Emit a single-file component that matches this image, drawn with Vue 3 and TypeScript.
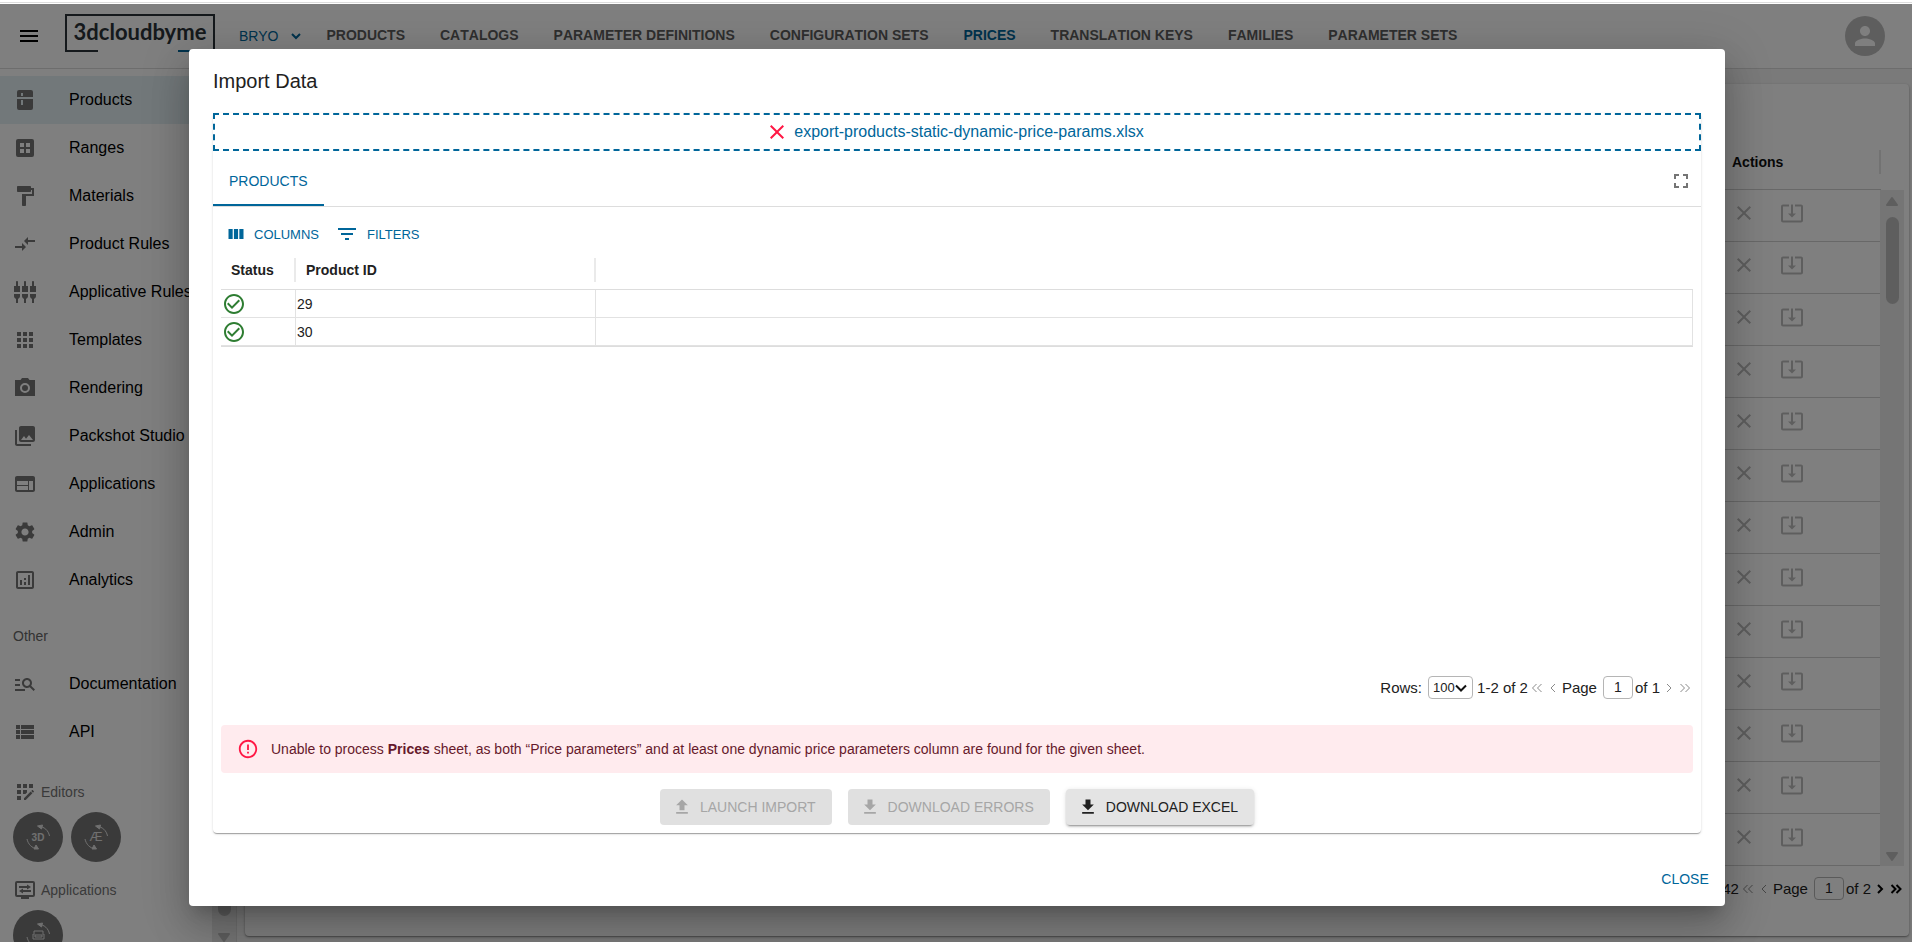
<script setup lang="ts">
import { ref } from 'vue'

const paths: Record<string, string> = {
  menu: 'M3 18h18v-2H3v2zm0-5h18v-2H3v2zm0-7v2h18V6H3z',
  kitchen: 'M6 2h12a2 2 0 0 1 2 2v5H4V4a2 2 0 0 1 2-2zm2 3v3h2V5zM4 11h16v9a2 2 0 0 1-2 2H6a2 2 0 0 1-2-2zm4 1v5h2v-5z',
  ranges: 'M5 3h14a2 2 0 0 1 2 2v14a2 2 0 0 1-2 2H5a2 2 0 0 1-2-2V5a2 2 0 0 1 2-2zm2 4v4h4V7zm6 0v4h4V7zm-6 6v4h4v-4zm6 0v4h4v-4z',
  paint: 'M18 4V3c0-.55-.45-1-1-1H5c-.55 0-1 .45-1 1v4c0 .55.45 1 1 1h12c.55 0 1-.45 1-1V6h1v4H9v11c0 .55.45 1 1 1h2c.55 0 1-.45 1-1v-9h8V4h-3z',
  compare: 'M9.01 14H2v2h7.01v3L13 15l-3.99-4v3zm5.98-1v-3H22V8h-7.01V5L11 9l3.99 4z',
  inputs: 'M5 2c0-.55-.45-1-1-1s-1 .45-1 1v4H1v6h6V6H5V2zm4 14c0 1.3.84 2.4 2 2.82V23h2v-4.18c1.16-.41 2-1.51 2-2.82v-2H9v2zm-8 0c0 1.3.84 2.4 2 2.82V23h2v-4.18C6.16 18.4 7 17.3 7 16v-2H1v2zM21 6V2c0-.55-.45-1-1-1s-1 .45-1 1v4h-2v6h6V6h-2zm-8-4c0-.55-.45-1-1-1s-1 .45-1 1v4H9v6h6V6h-2V2zm4 14c0 1.3.84 2.4 2 2.82V23h2v-4.18c1.16-.41 2-1.51 2-2.82v-2h-6v2z',
  apps: 'M4 8h4V4H4v4zm6 12h4v-4h-4v4zm-6 0h4v-4H4v4zm0-6h4v-4H4v4zm6 0h4v-4h-4v4zm6-10v4h4V4h-4zm-6 4h4V4h-4v4zm6 6h4v-4h-4v4zm0 6h4v-4h-4v4z',
  camera: 'M9 2 7.5 4H2v16h20V4h-5.5L15 2zM12 7a5 5 0 1 1 0 10 5 5 0 0 1 0-10zm0 2a3 3 0 1 0 0 6 3 3 0 0 0 0-6z',
  photos: 'M22 16V4c0-1.1-.9-2-2-2H8c-1.1 0-2 .9-2 2v12c0 1.1.9 2 2 2h12c1.1 0 2-.9 2-2zm-11-4l2.03 2.71L16 11l4 5H8l3-4zM2 6v14c0 1.1.9 2 2 2h14v-2H4V6H2z',
  web: 'M20 4H4c-1.1 0-1.99.9-1.99 2L2 18c0 1.1.9 2 2 2h16c1.1 0 2-.9 2-2V6c0-1.1-.9-2-2-2zm-5 14H4v-4h11v4zm0-5H4V9h11v4zm5 5h-4V9h4v9z',
  gear: 'M19.14 12.94c.04-.3.06-.61.06-.94 0-.32-.02-.64-.07-.94l2.03-1.58c.18-.14.23-.41.12-.61l-1.92-3.32c-.12-.22-.37-.29-.59-.22l-2.39.96c-.5-.38-1.03-.7-1.62-.94l-.36-2.54c-.04-.24-.24-.41-.48-.41h-3.84c-.24 0-.43.17-.47.41l-.36 2.54c-.59.24-1.13.57-1.62.94l-2.39-.96c-.22-.08-.47 0-.59.22L2.74 8.87c-.12.21-.08.47.12.61l2.03 1.58c-.05.3-.09.63-.09.94s.02.64.07.94l-2.03 1.58c-.18.14-.23.41-.12.61l1.92 3.32c.12.22.37.29.59.22l2.39-.96c.5.38 1.03.7 1.62.94l.36 2.54c.05.24.24.41.48.41h3.84c.24 0 .44-.17.47-.41l.36-2.54c.59-.24 1.13-.56 1.62-.94l2.39.96c.22.08.47 0 .59-.22l1.92-3.32c.12-.22.07-.47-.12-.61l-2.01-1.58zM12 15.6c-1.98 0-3.6-1.62-3.6-3.6s1.62-3.6 3.6-3.6 3.6 1.62 3.6 3.6-1.62 3.6-3.6 3.6z',
  chart: 'M9 17H7v-5h2v5zm4 0h-2v-3h2v3zm0-5h-2v-2h2v2zm4 5h-2V7h2v10zm2 2H5V5h14v14zm0-16H5c-1.1 0-2 .9-2 2v14c0 1.1.9 2 2 2h14c1.1 0 2-.9 2-2V5c0-1.1-.9-2-2-2z',
  docs: 'M7 9H2V7h5v2zm0 3H2v2h5v-2zm13.59 7-3.83-3.83c-.8.52-1.74.83-2.76.83-2.76 0-5-2.24-5-5s2.24-5 5-5 5 2.24 5 5c0 1.02-.31 1.96-.83 2.75L22 17.59 20.59 19zM17 11c0-1.65-1.35-3-3-3s-3 1.35-3 3 1.35 3 3 3 3-1.35 3-3zM2 19h10v-2H2v2z',
  list: 'M3 14h4v-4H3v4zm0 5h4v-4H3v4zM3 9h4V5H3v4zm5 5h13v-4H8v4zm0 5h13v-4H8v4zM8 5v4h13V5H8z',
  editors: 'M10 4h4v4h-4zM4 16h4v4H4zM4 10h4v4H4zM4 4h4v4H4zM14 12.42V10h-4v4h2.42zM20.88 11.29l-1.17-1.17c-.16-.16-.42-.16-.58 0L18.25 11 20 12.75l.88-.88c.16-.16.16-.42 0-.58zM11 18.25V20h1.75l6.67-6.67-1.75-1.75zM16 4h4v4h-4z',
  monitor: 'M4 3h16a2 2 0 0 1 2 2v12a2 2 0 0 1-2 2h-4v2H8v-2H4a2 2 0 0 1-2-2V5a2 2 0 0 1 2-2zm0 2v12h16V5zm2 3h8V6.500l4 2.500-4 2.500V10H6zm12 4v2h-8v1.500L6 13l4-2.500V12z',
  person: 'M12 12c2.21 0 4-1.79 4-4s-1.790-4-4-4-4 1.790-4 4 1.790 4 4 4zm0 2c-2.670 0-8 1.340-8 4v2h16v-2c0-2.660-5.330-4-8-4z',
  close: 'M19 6.410 17.590 5 12 10.590 6.410 5 5 6.410 10.590 12 5 17.590 6.410 19 12 13.410 17.590 19 19 17.590 13.410 12z',
  update: 'M12 16.500l4-4h-3v-9h-2v9H8l4 4zm9-13h-6v1.990h6v14.030H3V5.490h6V3.500H3c-1.100 0-2 .900-2 2v14c0 1.100.900 2 2 2h18c1.100 0 2-.900 2-2v-14c0-1.100-.900-2-2-2z',
  fullscreen: 'M7 14H5v5h5v-2H7v-3zm-2-4h2V7h3V5H5v5zm12 7h-3v2h5v-5h-2v3zM14 5v2h3v3h2V5h-5z',
  columns: 'M3 6h5v12H3zm6.500 0h5v12h-5zM16 6h5v12h-5z',
  filter: 'M10 18h4v-2h-4v2zM3 6v2h18V6H3zm3 7h12v-2H6v2z',
  check: 'M16.590 7.580L10 14.170l-3.590-3.580L5 12l5 5 8-8zM12 2C6.480 2 2 6.480 2 12s4.480 10 10 10 10-4.480 10-10S17.520 2 12 2zm0 18c-4.420 0-8-3.580-8-8s3.580-8 8-8 8 3.580 8 8-3.580 8-8 8z',
  error: 'M11 15h2v2h-2zm0-8h2v6h-2zm.990-5C6.470 2 2 6.480 2 12s4.470 10 9.990 10C17.520 22 22 17.520 22 12S17.520 2 11.990 2zM12 20c-4.420 0-8-3.580-8-8s3.580-8 8-8 8 3.580 8 8-3.580 8-8 8z',
  upload: 'M5 20h14v-2H5v2zm0-10h4v6h6v-6h4l-7-7-7 7z',
  download: 'M19 9h-4V3H9v6H5l7 7 7-7zM5 18v2h14v-2H5z',
}

const navigation = [
  'PRODUCTS', 'CATALOGS', 'PARAMETER DEFINITIONS', 'CONFIGURATION SETS',
  'PRICES', 'TRANSLATION KEYS', 'FAMILIES', 'PARAMETER SETS',
]

const menu = [
  { label: 'Products', icon: 'kitchen' },
  { label: 'Ranges', icon: 'ranges' },
  { label: 'Materials', icon: 'paint' },
  { label: 'Product Rules', icon: 'compare' },
  { label: 'Applicative Rules', icon: 'inputs' },
  { label: 'Templates', icon: 'apps' },
  { label: 'Rendering', icon: 'camera' },
  { label: 'Packshot Studio', icon: 'photos' },
  { label: 'Applications', icon: 'web' },
  { label: 'Admin', icon: 'gear' },
  { label: 'Analytics', icon: 'chart' },
]

const otherMenu = [
  { label: 'Documentation', icon: 'docs' },
  { label: 'API', icon: 'list' },
]

const products = [29, 30]
const rowsPerPage = ref('100')
const page = ref('1')
const backgroundPage = ref('1')
</script>

<template>
  <div class="page">
    <div class="strip"></div>
    <div class="app">
      <header class="topbar">
        <button class="plain menu-button" aria-label="Menu">
          <svg class="icon" viewBox="0 0 24 24"><path :d="paths.menu" /></svg>
        </button>
        <a class="logo" href="#">
          <svg class="logo-frame" viewBox="0 0 150 38" aria-hidden="true">
            <path d="M33 37H1V1h148v36h-2" fill="none" stroke="#2b3338" stroke-width="2" />
            <path d="M113 37h35" stroke="#00669a" stroke-width="2" />
          </svg>
          <span>3dcloudbyme</span>
        </a>
        <button class="plain tenant">
          BRYO
          <svg class="tenant-arrow" viewBox="0 0 12 12"><path d="M2 4l4 4 4-4" /></svg>
        </button>
        <nav class="navigation">
          <a v-for="item in navigation" :key="item" href="#" :class="{ current: item === 'PRICES' }">{{ item }}</a>
        </nav>
        <button class="plain avatar" aria-label="Account">
          <svg viewBox="0 0 24 24"><path :d="paths.person" /></svg>
        </button>
      </header>

      <div class="body">
        <aside class="sidebar">
          <div class="sidebar-content">
            <a v-for="(item, i) in menu" :key="item.label" href="#" class="menu-item" :class="{ selected: i === 0 }">
              <svg class="icon" viewBox="0 0 24 24"><path :d="paths[item.icon]" fill-rule="evenodd" /></svg>{{ item.label }}
            </a>
            <div class="subheader">Other</div>
            <a v-for="item in otherMenu" :key="item.label" href="#" class="menu-item">
              <svg class="icon" viewBox="0 0 24 24"><path :d="paths[item.icon]" /></svg>{{ item.label }}
            </a>
            <div class="group-label first">
              <svg class="icon" viewBox="0 0 24 24"><path :d="paths.editors" /></svg>Editors
            </div>
            <div class="rounds">
              <a v-for="name in ['3D', 'Æ']" :key="name" href="#" class="round">
                <svg viewBox="0 0 50 50">
                  <path d="M26 14.500c5 0 9.500 4 10.500 9.500M14 27c1 5 5 9.500 10 9.500" />
                  <path class="solid" d="M24.500 14l5-1-1 4zM25.500 37l-4.500 0 2-4z" />
                  <text x="25" y="29" :class="{ light: name === 'Æ' }">{{ name }}</text>
                </svg>
              </a>
            </div>
            <div class="group-label">
              <svg class="icon" viewBox="0 0 24 24"><path :d="paths.monitor" fill-rule="evenodd" /></svg>Applications
            </div>
            <div class="rounds">
              <a href="#" class="round" aria-label="Furniture">
                <svg viewBox="0 0 50 50">
                  <path d="M26 14.500c5 0 9.500 4 10.500 9.500M14 27c1 5 5 9.500 10 9.500" />
                  <path class="solid" d="M24.500 14l5-1-1 4zM25.500 37l-4.500 0 2-4z" />
                  <path d="M21 25v-4h9v4M22 25h7v2h-7zM20 24v5h11v-5" />
                </svg>
              </a>
            </div>
          </div>
          <div class="scrollbar">
            <span class="thumb"></span>
            <svg class="scroll-arrow" viewBox="0 0 16 12"><path d="M3 2h10L8 9z" /></svg>
          </div>
        </aside>

        <main class="main">
          <section class="panel">
            <div class="price-grid">
              <table class="price-table">
                <thead>
                  <tr><td></td><th scope="col"><span>Actions</span></th></tr>
                </thead>
                <tbody>
                  <tr v-for="n in 13" :key="n">
                    <td></td>
                    <td>
                      <span class="row-actions">
                        <button class="plain" disabled aria-label="Delete"><svg class="icon" viewBox="0 0 24 24"><path :d="paths.close" /></svg></button>
                        <button class="plain" disabled aria-label="Import"><svg class="icon" viewBox="0 0 24 24"><path :d="paths.update" /></svg></button>
                      </span>
                    </td>
                  </tr>
                </tbody>
              </table>
              <div class="scrollbar grid-scroll">
                <svg class="scroll-arrow" viewBox="0 0 16 12"><path d="M3 9h10L8 2z" /></svg>
                <span class="thumb"></span>
                <svg class="scroll-arrow last" viewBox="0 0 16 12"><path d="M3 3h10L8 10z" /></svg>
              </div>
            </div>
            <div class="pager back-pager">
              <span>42</span>
              <button class="plain arrow dim" aria-label="First page"><svg viewBox="0 0 12 12"><path d="M5.500 2L1.500 6l4 4M10.500 2l-4 4 4 4" /></svg></button>
              <button class="plain arrow dim" aria-label="Previous page"><svg viewBox="0 0 12 12"><path d="M8 2L4 6l4 4" /></svg></button>
              <label class="page-label" for="back-page">Page</label>
              <input id="back-page" v-model="backgroundPage" />
              <span>of 2</span>
              <button class="plain arrow" aria-label="Next page"><svg viewBox="0 0 12 12"><path d="M4 2l4 4-4 4" /></svg></button>
              <button class="plain arrow" aria-label="Last page"><svg viewBox="0 0 12 12"><path d="M1.500 2l4 4-4 4M6.500 2l4 4-4 4" /></svg></button>
            </div>
          </section>
        </main>
      </div>

      <div class="backdrop">
        <div class="dialog" role="dialog" aria-modal="true" aria-labelledby="dialog-title">
          <h2 id="dialog-title">Import Data</h2>
          <div class="content">
            <section class="paper">
              <div class="dropzone">
                <button class="plain remove" aria-label="Remove file"><svg class="icon" viewBox="0 0 24 24"><path :d="paths.close" /></svg></button>
                <a href="#">export-products-static-dynamic-price-params.xlsx</a>
              </div>
              <div class="tabs" role="tablist">
                <button class="plain tab" role="tab" aria-selected="true">PRODUCTS</button>
                <button class="plain expand" aria-label="Full screen"><svg class="icon" viewBox="0 0 24 24"><path :d="paths.fullscreen" /></svg></button>
              </div>
              <div class="paper-body">
                <div class="toolbar">
                  <button class="plain"><svg class="columns-icon" viewBox="0 0 24 24"><path :d="paths.columns" /></svg>COLUMNS</button>
                  <button class="plain"><svg class="icon" viewBox="0 0 24 24"><path :d="paths.filter" /></svg>FILTERS</button>
                </div>
                <div class="grid-area">
                  <table class="product-table">
                    <thead>
                      <tr>
                        <th class="status" scope="col"><span>Status</span></th>
                        <th class="product" scope="col"><span>Product ID</span></th>
                        <td></td>
                      </tr>
                    </thead>
                    <tbody>
                      <tr v-for="id in products" :key="id">
                        <td><svg class="icon ok" viewBox="0 0 24 24"><path :d="paths.check" /></svg></td>
                        <td>{{ id }}</td>
                        <td></td>
                      </tr>
                    </tbody>
                  </table>
                </div>
                <div class="pager">
                  <label class="rows-label" for="rows">Rows:</label>
                  <span class="select">
                    <select id="rows" v-model="rowsPerPage"><option>100</option></select>
                    <svg viewBox="0 0 14 14"><path d="M2 4.500l5 5 5-5" /></svg>
                  </span>
                  <span>1-2 of 2</span>
                  <button class="plain arrow dim" aria-label="First page"><svg viewBox="0 0 12 12"><path d="M5.500 2L1.500 6l4 4M10.500 2l-4 4 4 4" /></svg></button>
                  <button class="plain arrow dim" aria-label="Previous page"><svg viewBox="0 0 12 12"><path d="M8 2L4 6l4 4" /></svg></button>
                  <label class="page-label" for="page">Page</label>
                  <input id="page" v-model="page" />
                  <span>of 1</span>
                  <button class="plain arrow dim" aria-label="Next page"><svg viewBox="0 0 12 12"><path d="M4 2l4 4-4 4" /></svg></button>
                  <button class="plain arrow dim" aria-label="Last page"><svg viewBox="0 0 12 12"><path d="M1.500 2l4 4-4 4M6.500 2l4 4-4 4" /></svg></button>
                </div>
                <div class="alert" role="alert">
                  <svg viewBox="0 0 24 24"><path :d="paths.error" /></svg>
                  <div>Unable to process <b>Prices</b> sheet, as both “Price parameters” and at least one dynamic price parameters column are found for the given sheet.</div>
                </div>
                <div class="buttons">
                  <button class="contained" disabled><svg viewBox="0 0 24 24"><path :d="paths.upload" /></svg>LAUNCH IMPORT</button>
                  <button class="contained" disabled><svg viewBox="0 0 24 24"><path :d="paths.download" /></svg>DOWNLOAD ERRORS</button>
                  <button class="contained"><svg viewBox="0 0 24 24"><path :d="paths.download" /></svg>DOWNLOAD EXCEL</button>
                </div>
              </div>
            </section>
          </div>
          <footer class="actions"><button class="plain close">CLOSE</button></footer>
        </div>
      </div>
    </div>
  </div>
</template>

<style>
body {
  margin: 0;
  overflow: hidden;
}
</style>

<style scoped>
* {
  box-sizing: border-box;
}
.page {
  height: 100vh;
  display: flex;
  flex-direction: column;
  font-family: "Liberation Sans", Arial, sans-serif;
  font-size: 14px;
  color: #212121;
  background: #fff;
}
a {
  color: inherit;
  text-decoration: none;
}
svg {
  display: block;
  flex: none;
  fill: currentColor;
}
.icon {
  width: 24px;
  height: 24px;
}
.plain {
  border: 0;
  padding: 0;
  background: none;
  font: inherit;
  color: inherit;
  display: flex;
  align-items: center;
}
.strip {
  flex: none;
  height: 4px;
  border-top: 2px solid #fff;
  border-bottom: 1px solid #fff;
  background: #ddd;
}
.app {
  position: relative;
  flex: 1;
  min-height: 0;
  display: flex;
  flex-direction: column;
}
.topbar {
  flex: none;
  height: 65px;
  display: flex;
  align-items: center;
  padding: 0 27px 0 17px;
  border-bottom: 1px solid #dadada;
}
.menu-button {
  color: #000;
}
.logo {
  position: relative;
  width: 150px;
  height: 38px;
  margin: 0 24px 6px;
  display: flex;
  justify-content: center;
  color: #2b3338;
  font: bold 22px/36px Lato, "Noto Sans", sans-serif;
}
.logo-frame {
  position: absolute;
  inset: 0;
}
.tenant {
  gap: 12px;
  color: #00669a;
}
.tenant-arrow {
  width: 12px;
  height: 12px;
  fill: none;
  stroke: currentColor;
  stroke-width: 2;
}
.navigation {
  flex: 1;
  display: flex;
  gap: 35px;
  margin-left: 24px;
  padding-bottom: 2px;
  font-weight: bold;
  color: #5f5f5f;
  white-space: nowrap;
  font-kerning: none;
}
.current {
  color: #00669a;
}
.avatar {
  width: 40px;
  height: 40px;
  border-radius: 50%;
  background: #bdbdbd;
  color: #fff;
  justify-content: center;
}
.avatar svg {
  width: 30px;
  height: 30px;
}
.body {
  flex: 1;
  min-height: 0;
  display: flex;
}
.sidebar {
  flex: none;
  width: 237px;
  display: flex;
  border-right: 1px solid #ddd;
}
.sidebar-content {
  flex: 1;
  overflow: hidden;
  padding-top: 7px;
}
.menu-item {
  display: flex;
  align-items: center;
  gap: 32px;
  height: 48px;
  padding-left: 13px;
  font-size: 16px;
  color: #000;
  white-space: nowrap;
}
.menu-item .icon,
.group-label .icon {
  color: #757575;
}
.selected {
  background: #e5f0f5;
}
.subheader {
  margin-top: 8px;
  padding-left: 13px;
  line-height: 48px;
  color: #666;
}
.group-label {
  display: flex;
  align-items: center;
  gap: 4px;
  height: 24px;
  margin: 16px 0 8px;
  padding-left: 13px;
  color: #757575;
}
.group-label.first {
  margin-top: 24px;
}
.rounds {
  display: flex;
  gap: 8px;
  padding-left: 13px;
}
.round {
  width: 50px;
  height: 50px;
  border-radius: 50%;
  background: #757575;
}
.round svg {
  fill: none;
  stroke: #e0e0e0;
}
.round .solid {
  fill: #e0e0e0;
}
.round text {
  font-size: 10px;
  font-weight: bold;
  text-anchor: middle;
  fill: #e0e0e0;
  stroke: none;
}
.round .light {
  font-size: 13px;
  font-weight: normal;
}
.scrollbar {
  flex: none;
  width: 24px;
  display: flex;
  flex-direction: column;
  align-items: center;
  background: #eaeaea;
}
.thumb {
  width: 13px;
  border-radius: 7px;
  background: #bdbdbd;
}
.sidebar .thumb {
  flex: 1;
  margin-bottom: 16px;
}
.scroll-arrow {
  width: 16px;
  height: 12px;
  margin-bottom: -2px;
  fill: #bdbdbd;
  stroke: #bdbdbd;
  stroke-width: 2;
  stroke-linejoin: round;
}
.main {
  flex: 1;
  min-width: 0;
  display: flex;
  padding: 15px 3px 6px 8px;
  background: #f5f5f5;
}
.panel {
  flex: 1;
  display: flex;
  flex-direction: column;
  padding: 56px 5px 0;
  border-radius: 4px;
  background: #fff;
  box-shadow: 0 1px 3px rgba(0, 0, 0, 0.3), 0 1px 1px rgba(0, 0, 0, 0.2);
}
.price-grid {
  position: relative;
  padding-right: 23px;
}
.price-table {
  width: 100%;
  border-collapse: separate;
  border-spacing: 0;
}
.price-table th,
.price-table td {
  height: 52px;
  padding: 0;
  text-align: left;
  border-bottom: 1px solid #d0d0d0;
}
.price-table thead th,
.price-table thead td {
  height: 50px;
}
.price-table th {
  width: 149px;
  padding-bottom: 5px;
  color: #111;
}
.price-table th span {
  display: block;
  border-right: 2px solid #e4e4e4;
  line-height: 24px;
}
.grid-scroll {
  position: absolute;
  top: 50px;
  right: 0;
  bottom: 0;
  padding-top: 6px;
}
.grid-scroll .thumb {
  height: 87px;
  margin-top: 11px;
}
.grid-scroll .last {
  margin: auto 0 4px;
}
.row-actions {
  display: flex;
  gap: 24px;
  margin-bottom: 6px;
  color: #bdbdbd;
}
.pager {
  display: flex;
  align-items: center;
  justify-content: flex-end;
  gap: 2px;
  height: 24px;
  padding-right: 1px;
  font-size: 15px;
  white-space: nowrap;
}
.back-pager {
  margin-top: 10px;
}
.rows-label {
  margin-right: 4px;
}
.page-label {
  margin-right: 4px;
}
.pager input {
  width: 30px;
  height: 23px;
  padding: 0;
  border: 1px solid #b5b5b5;
  border-radius: 4px;
  background: #fff;
  text-align: center;
  color: #212121;
  font: 14px "Liberation Sans", Arial, sans-serif;
}
.arrow {
  width: 14px;
  height: 24px;
  justify-content: center;
  color: #000;
}
.arrow svg {
  width: 12px;
  height: 12px;
  margin-top: 2px;
  fill: none;
  stroke: currentColor;
  stroke-width: 2;
}
.arrow.dim {
  color: #8a8a8a;
}
.arrow.dim svg {
  stroke-width: 1;
}
.select {
  position: relative;
  margin-right: 2px;
}
.select select {
  appearance: none;
  display: block;
  width: 45px;
  height: 23px;
  padding: 0 0 0 4px;
  border: 1px solid #b5b5b5;
  border-radius: 4px;
  background: #fff;
  color: #212121;
  font: 13px "Liberation Sans", Arial, sans-serif;
}
.select svg {
  position: absolute;
  top: 5px;
  right: 5px;
  width: 14px;
  height: 14px;
  fill: none;
  stroke: #111;
  stroke-width: 2;
  pointer-events: none;
}
.backdrop {
  position: absolute;
  inset: 0;
  display: flex;
  justify-content: center;
  padding: 45px 0 36px 2px;
  background: rgba(0, 0, 0, 0.5);
}
.dialog {
  flex: 1;
  max-width: 1536px;
  display: flex;
  flex-direction: column;
  border-radius: 4px;
  background: #fff;
  box-shadow: 0 11px 15px -7px rgba(0, 0, 0, 0.2), 0 24px 38px 3px rgba(0, 0, 0, 0.14), 0 9px 46px 8px rgba(0, 0, 0, 0.12);
}
.dialog h2 {
  margin: 0;
  padding: 16px 24px;
  font-size: 20px;
  font-weight: normal;
  line-height: 32px;
}
.content {
  flex: 1;
  min-height: 0;
  display: flex;
  padding: 0 24px 20px;
}
.paper {
  flex: 1;
  display: flex;
  flex-direction: column;
  border-radius: 4px;
  box-shadow: 0 2px 1px -1px rgba(0, 0, 0, 0.2), 0 1px 1px rgba(0, 0, 0, 0.14), 0 1px 3px rgba(0, 0, 0, 0.12);
}
.dropzone {
  display: flex;
  align-items: center;
  justify-content: center;
  gap: 5px;
  height: 38px;
  padding-right: 5px;
  border: 2px dashed #00669a;
  font-size: 16px;
  color: #00669a;
}
.remove {
  color: #ff1744;
}
.tabs {
  display: flex;
  justify-content: space-between;
  height: 56px;
  padding-right: 8px;
  border-bottom: 1px solid #ddd;
}
.tab {
  height: 55px;
  padding: 6px 16px 0;
  border-bottom: 2px solid #00669a;
  color: #00669a;
}
.expand {
  height: 60px;
  color: #757575;
}
.paper-body {
  flex: 1;
  display: flex;
  flex-direction: column;
  padding: 11px 8px 8px;
}
.toolbar {
  display: flex;
  gap: 16px;
  height: 32px;
  padding-left: 5px;
  color: #00669a;
  font-size: 13px;
}
.toolbar .plain {
  gap: 8px;
}
.columns-icon {
  width: 20px;
  height: 20px;
}
.grid-area {
  flex: 1;
}
.product-table {
  width: 100%;
  table-layout: fixed;
  border-collapse: separate;
  border-spacing: 0;
  border-bottom: 1px solid #ddd;
}
.product-table th,
.product-table td {
  padding: 0;
  text-align: left;
}
.product-table thead th,
.product-table thead td {
  height: 40px;
  border-bottom: 1px solid #ddd;
}
.product-table th span {
  display: block;
  padding-left: 10px;
  border-right: 2px solid #eaeaea;
  line-height: 24px;
}
.status {
  width: 75px;
}
.product {
  width: 300px;
}
.product-table tbody td {
  height: 28px;
  border-bottom: 1px solid #e2e2e2;
  border-right: 1px solid #e2e2e2;
}
.product-table tbody td:nth-child(2) {
  padding-left: 1px;
}
.ok {
  margin-left: 1px;
  color: #2e7d32;
}
.alert {
  display: flex;
  align-items: center;
  gap: 12px;
  min-height: 48px;
  margin: 26px 0 16px;
  padding: 0 16px;
  border-radius: 4px;
  background: #ffebee;
  color: #66192b;
}
.alert svg {
  width: 22px;
  height: 22px;
  color: #ff1744;
}
.buttons {
  display: flex;
  justify-content: center;
  gap: 16px;
}
.contained {
  display: flex;
  align-items: center;
  gap: 8px;
  height: 36px;
  padding: 0 16px 0 12px;
  border: 0;
  border-radius: 4px;
  background: #e4e4e4;
  color: #212121;
  font: 14px "Liberation Sans", Arial, sans-serif;
  box-shadow: 0 3px 1px -2px rgba(0, 0, 0, 0.2), 0 2px 2px rgba(0, 0, 0, 0.14), 0 1px 5px rgba(0, 0, 0, 0.12);
}
.contained:disabled {
  background: #e0e0e0;
  color: #a6a6a6;
  box-shadow: none;
}
.contained svg {
  width: 20px;
  height: 20px;
}
.actions {
  display: flex;
  justify-content: flex-end;
  padding: 8px 8px 9px;
}
.close {
  justify-content: center;
  width: 64px;
  height: 36px;
  color: #00669a;
}
</style>
